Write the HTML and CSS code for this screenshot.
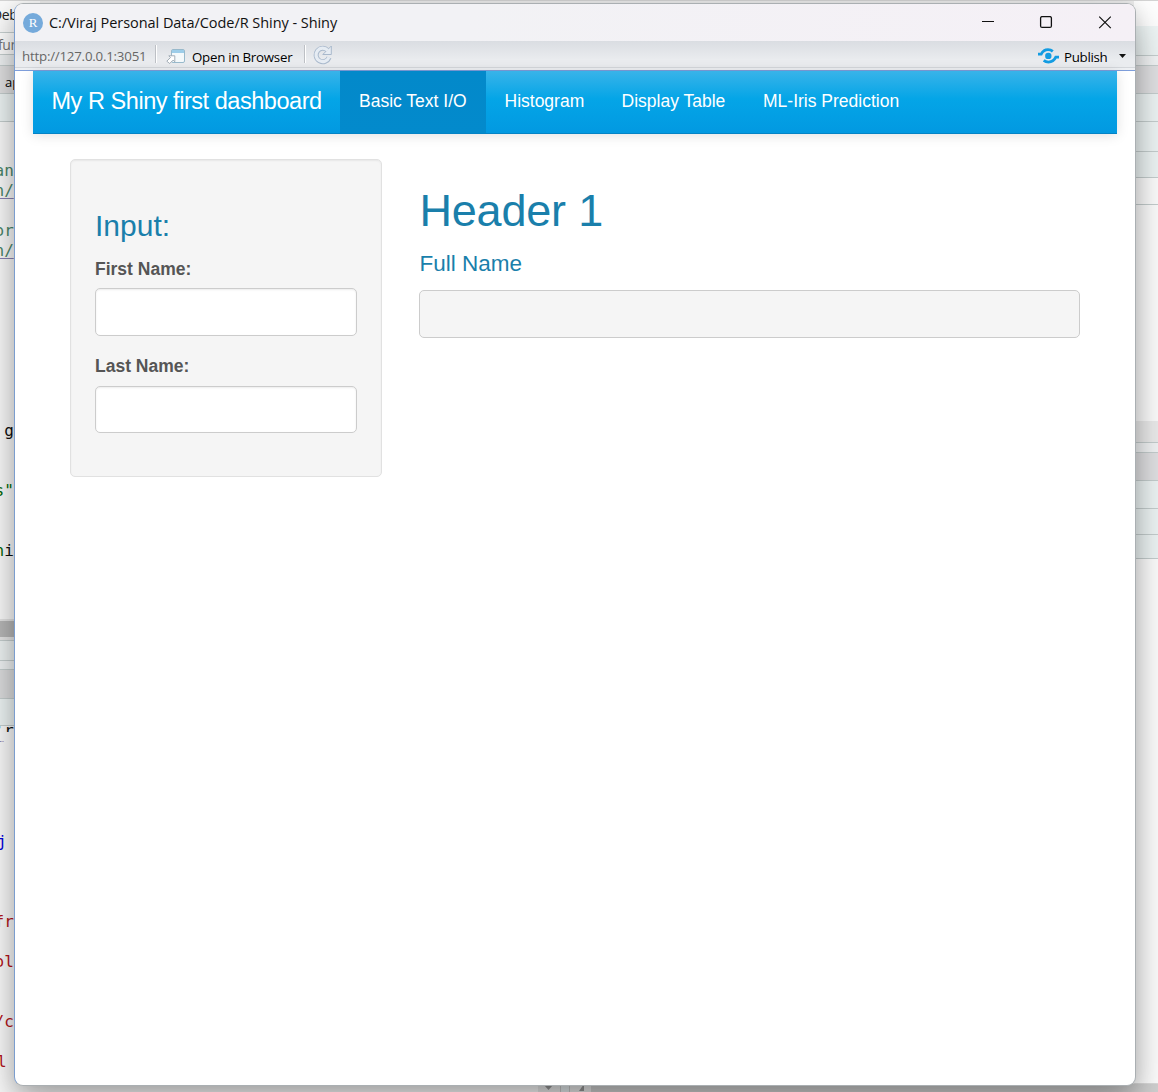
FILE: index.html
```
<!DOCTYPE html>
<html lang="en">
<head>
<meta charset="utf-8">
<title>R Shiny - Shiny</title>
<link rel="stylesheet" href="styles.css">
</head>
<body>
<div class="desktop">
  <div class="ide">
    <div class="pane left">
      <div class="band menu">Deb</div>
      <div class="band search">fun</div>
      <div class="band gap"></div>
      <div class="band tab">ap</div>
      <div class="band tools"></div>
      <div class="code source">
        <p></p><p></p><p class="comment">an</p><p class="comment link">n/</p><p></p><p class="comment">or</p><p class="comment link">n/</p>
        <p></p><p></p><p></p><p></p><p></p><p></p><p></p><p></p><p> g</p><p></p><p></p><p class="string">s"</p><p></p><p></p><p><span class="string">n</span>i</p>
      </div>
      <div class="band scroll"></div>
      <div class="band status"></div>
      <div class="band gap small"></div>
      <div class="band tab lower"></div>
      <div class="band tools lower"></div>
      <div class="code console">
        <p class="cut">'r</p><p class="cut second">r</p><p></p><p></p><p></p><p></p><p class="keyword">j</p><p></p><p></p><p></p><p class="error">fr</p><p></p><p class="error">ol</p><p></p><p></p><p class="error">/c</p><p></p><p class="error single">l</p>
      </div>
    </div>
    <div class="pane right">
      <div class="band r-menu"></div>
      <div class="band r-tools"></div>
      <div class="band r-gap"></div>
      <div class="band r-tab"></div>
      <div class="band r-row"></div>
      <div class="band r-row tall"></div>
      <div class="band r-row short"></div>
      <div class="band r-white"></div>
      <div class="r-fill"></div>
      <div class="band r-scroll"></div>
      <div class="band r-gap"></div>
      <div class="band r-tab"></div>
      <div class="band r-row"></div>
      <div class="band r-row mid"></div>
      <div class="band r-row low"></div>
      <div class="r-rest"></div>
      <div class="r-foot"></div>
    </div>
  </div>
  <div class="footer">
    <div class="foot-track"></div>
    <div class="foot-arrow"><svg width="10" height="6"><path d="M0 1h9L4.500 6z" fill="#999"/></svg></div>
    <div class="foot-split"></div>
    <div class="foot-arrow side"><svg width="6" height="7"><path d="M6 0v7H1z" fill="#999"/></svg></div>
    <div class="foot-thumb"></div>
  </div>

  <div class="window">
    <header class="titlebar">
      <svg class="logo" width="20" height="20" viewBox="0 0 20 20"><circle cx="10" cy="10" r="10" fill="#75aadb"/><text x="10" y="14" text-anchor="middle" class="logo-r">R</text></svg>
      <span class="title">C:/Viraj Personal Data/Code/R Shiny - Shiny</span>
      <svg class="controls" width="132" height="14" viewBox="0 0 132 14" fill="none" stroke="#111"><path d="M1 5.500h12" stroke-width="1.200"/><rect x="59.600" y=".6" width="10.800" height="10.800" rx="1.500" stroke-width="1.300"/><path d="M118.200 .6l11.600 11.600M129.800 .6l-11.600 11.600" stroke-width="1.200"/></svg>
    </header>
    <div class="toolbar">
      <span class="url">http://127.0.0.1:3051</span>
      <i class="sep"></i>
      <svg class="open-icon" width="19" height="15" viewBox="0 0 19 15"><rect x="5.500" y=".5" width="13" height="13" rx="1.500" fill="#f4f9fb" stroke="#98b9cb"/><path d="M6 1h12v3H6z" fill="#9dcde9"/><path d="M.8 12.200l3.700-3.700-1.700-1.700h6v6L7.100 11.100l-3.400 3.400z" fill="#fff" stroke="#9aa6b0" stroke-width=".9"/></svg>
      <span class="open">Open in Browser</span>
      <i class="sep second"></i>
      <svg class="refresh" width="20" height="20" viewBox="0 0 20 20"><path d="M14.500 5.200A6.700 6.700 0 1 0 16.100 12.500" fill="none" stroke="#a9b9cc" stroke-width="5"/><path d="M18.300 1v8.500H9.800z" fill="#e6ecf3" stroke="#a9b9cc"/><path d="M14.700 5.400A6.700 6.700 0 1 0 16 12.200" fill="none" stroke="#e6ecf3" stroke-width="3.200"/></svg>
      <svg class="publish-icon" width="21" height="16" viewBox="0 0 21 16"><g fill="none" stroke="#139ce2" stroke-width="2.800"><path d="M0 6.200h3.200C4.800 3 7.200 1.700 10 1.700c2 0 3.500.6 4.800 1.700"/><path d="M21 9.200h-3.200c-1.600 3.400-4.300 4.900-7.300 4.900-2 0-3.500-.6-4.800-1.700"/></g><circle cx="10.300" cy="7.900" r="3.200" fill="#139ce2"/></svg>
      <span class="publish">Publish</span>
      <svg class="caret" width="7" height="4"><path d="M0 0h7L3.500 4z" fill="#111"/></svg>
    </div>
    <nav class="navbar">
      <a class="brand">My R Shiny first dashboard</a>
      <a class="item active">Basic Text I/O</a>
      <a class="item">Histogram</a>
      <a class="item table">Display Table</a>
      <a class="item iris">ML-Iris Prediction</a>
    </nav>
    <main class="content">
      <form class="well">
        <h3>Input:</h3>
        <label for="first">First Name:</label>
        <input id="first" type="text">
        <label for="last">Last Name:</label>
        <input id="last" class="last" type="text">
      </form>
      <section class="output">
        <h1>Header 1</h1>
        <h4>Full Name</h4>
        <pre class="result"></pre>
      </section>
    </main>
  </div>
</div>
</body>
</html>
```
FILE: styles.css
```
* { box-sizing: border-box; }
body { margin: 0; overflow: hidden; font-family: "Liberation Sans", Arial, sans-serif; }
h1, h3, h4, p, pre { margin: 0; font-weight: 400; }
.desktop { position: relative; width: 1158px; height: 1092px; overflow: hidden; background: #eee; }
.ide { display: flex; justify-content: space-between; height: 1092px; border-top: 1px solid #d5d5d5; }
.pane { width: 24px; display: flex; flex-direction: column; overflow: hidden; background: #fcfcfc; }
.band { flex: none; border-bottom: 1px solid #c7d0d0; white-space: nowrap; }

/* Editor and console behind the window */
.left { width: 40px; }
.menu { height: 32px; font: 14px/27px "Open Sans", sans-serif; letter-spacing: -.4px; text-indent: -8px; color: #222; background: #fafafa; }
.search { height: 22px; font: 14px/24px "Open Sans", sans-serif; letter-spacing: -.4px; text-indent: -2px; color: #777; background: #fff; }
.gap { height: 11px; background: #f1f4f5; }
.tab { height: 28px; font: 13px/32px "Open Sans", sans-serif; text-indent: 5px; color: #000; background: #e3e3e4; }
.tools { height: 28px; background: #f0f7f7; }
.code { flex: none; font: 16px/20px "DejaVu Sans Mono", monospace; color: #101010; }
.code p { height: 20px; margin-left: -5.500px; white-space: pre; }
.source { height: 498px; margin-top: -1px; }
.comment { color: #4c886b; }
.comment.link { text-decoration: underline; text-decoration-color: #8b83b5; text-underline-offset: 2px; }
.string { color: #036a07; }
.scroll { height: 21px; background: #b9b9b9; border-top: 2px solid #e5e5e5; border-bottom: 3px solid #e8e8e8; }
.status { height: 21px; background: #f0f5f5; border-top: 1px solid #c7d0d0; }
.gap.small { height: 9px; }
.tab.lower { height: 29px; background: #dedfe0; }
.tools.lower { height: 27px; }
.code.console { height: 366px; }
.code.console .cut { height: 6px; overflow: hidden; line-height: 10px; }
.code.console .second { height: 5px; line-height: 6px; margin-top: 9px; margin-bottom: 6px; color: #604080; }
.code .keyword { color: #0000e0; }
.code .error { color: #b5141b; }
.code p.keyword, .code p.single { margin-left: -3px; }

.right { width: 24px; }
.r-menu { height: 25px; background: #fff; border: 0; }
.r-tools { height: 30px; background: #f0f7f7; }
.r-gap { height: 10px; background: #f4f6f7; }
.r-tab { height: 28px; background: #e3e3e5; }
.r-row { height: 28px; background: #f0f7f7; }
.r-row.tall { height: 30px; }
.r-row.short { height: 26px; }
.r-row.mid { height: 26px; }
.r-row.low { height: 24px; }
.r-white { height: 27px; background: #fff; }
.r-fill { height: 216px; background: #fff; }
.r-scroll { height: 22px; background: #eee; }
.r-rest { height: 524px; background: #fff; }
.r-foot { flex: 1; background: #ddd; }
.footer { position: absolute; left: 40px; right: 0; bottom: 0; height: 8px; display: flex; background: #eee; }
.foot-track { width: 498px; background: #fff; }
.foot-arrow { width: 22px; padding-left: 6px; background: #eee; line-height: 0; }
.foot-split { width: 10px; border: solid #ccc; border-width: 0 1px; background: #eaf0f2; }
.foot-arrow.side { width: 21px; padding-left: 8px; }
.foot-thumb { flex: 1; background: #d2d2d2; }

/* Application window */
.window { position: absolute; left: 14px; top: 3px; width: 1122px; height: 1083px; border: 1px solid #aaafb2; border-left-color: #7b9dce; border-radius: 9px; background: #fff; overflow: hidden; box-shadow: 0 18px 38px rgba(0,0,0,.34), 0 2px 16px rgba(0,0,0,.09); }
.titlebar { height: 37px; display: flex; align-items: center; padding: 0 22px 0 8px; background: linear-gradient(90deg, #f2f2f5 40%, #f5f0f6); }
.logo-r { font: 13px "Liberation Serif", serif; fill: #fff; }
.title { margin-left: 6px; font: 14.500px/20px "Open Sans", sans-serif; letter-spacing: -.05px; color: #111; white-space: nowrap; }
.controls { margin-left: auto; }
.toolbar { height: 30px; display: flex; align-items: center; padding: 1px 9px 0 7px; border-bottom: 1px solid #7e9edb; box-shadow: inset 0 -1px #eef0f3, inset 0 -2px #eef0f3, inset 0 -3px #d4d7db; background: linear-gradient(#dadde2, #eaecef 65%); font: 13.300px/20px "Open Sans", sans-serif; white-space: nowrap; }
.url { width: 133px; color: #666; letter-spacing: -.22px; }
.sep { width: 2px; height: 18px; margin-top: -4px; border-left: 1px solid #bdc0c5; border-right: 1px solid #fff; }
.open-icon { margin-left: 9px; }
.open { width: 107px; margin-left: 7px; color: #000; letter-spacing: -.25px; padding-top: 1px; }
.sep.second { margin-left: 5px; }
.refresh { margin-left: 7px; margin-top: -3px; }
.publish-icon { margin-left: auto; }
.publish { width: 44px; margin-left: 5px; padding-top: 1px; letter-spacing: -.3px; }
.caret { margin-left: 11px; }
.navbar { height: 63px; margin: 0 18px; display: flex; border-bottom: 1px solid #0483c5; background: linear-gradient(#39b3e9, #04a5e7 45%, #0299e1); box-shadow: 0 1px 12px rgba(0,0,0,.13); color: #fff; white-space: nowrap; }
.brand { width: 307px; padding-left: 18.500px; font-size: 23.500px; line-height: 60px; letter-spacing: -.46px; }
.item { font-size: 17.500px; line-height: 60px; padding-left: 18.500px; width: 117px; }
.item.active { width: 146px; padding-left: 19px; background: linear-gradient(#0389ca, #038acc); }
.item.table { width: 142px; }
.item.iris { width: 174px; padding-left: 18px; }
.content { display: flex; align-items: flex-start; padding: 25px 55px 0; gap: 37px; }
.well { width: 312px; height: 318px; padding: 49px 24px 24px; border: 1px solid #e1e1e1; border-radius: 5px; background: #f5f5f5; box-shadow: inset 0 1px 2px rgba(0,0,0,.06); }
.well h3 { font-size: 30px; line-height: 33px; color: #1a7fab; }
.well label { display: block; height: 24px; margin-top: 15px; margin-bottom: 7px; font-size: 17.500px; line-height: 24px; font-weight: 700; color: #555; }
.well input { display: block; width: 262px; height: 48px; border: 1px solid #ccc; border-radius: 5px; background: #fff; box-shadow: inset 0 1px 2px rgba(0,0,0,.08); outline: 0; }
.well input + label { margin-top: 18px; margin-bottom: 8px; }
.well .last { height: 47px; }
.output { width: 661px; padding-top: 27px; color: #1a7fab; }
.output h1 { font-size: 45px; line-height: 50px; letter-spacing: -.2px; text-indent: .5px; }
.output h4 { margin-top: 15px; font-size: 22.500px; line-height: 26px; text-indent: .5px; }
.result { height: 48px; margin-top: 13px; border: 1px solid #ccc; border-radius: 5px; background: #f5f5f5; }
```
